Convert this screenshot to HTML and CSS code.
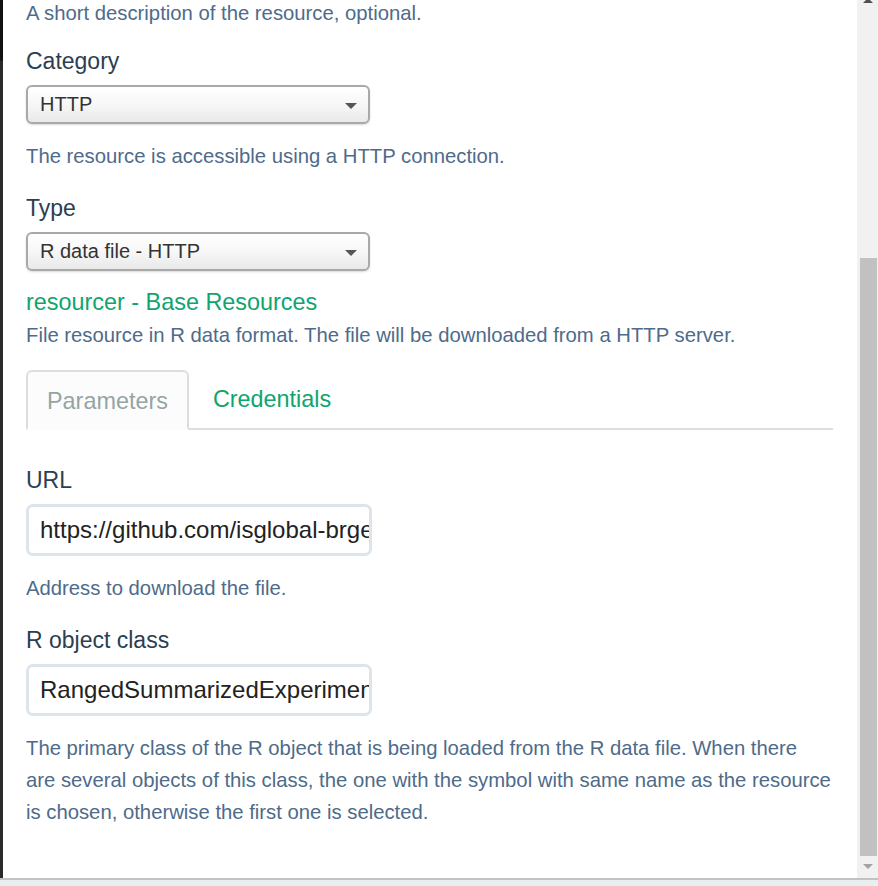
FILE: index.html
```html
<!DOCTYPE html>
<html>
<head>
<meta charset="utf-8">
<link rel="stylesheet" href="styles.css">
</head>
<body>
<div class="screen">
  <div class="backdrop"></div>
  <div class="modal-body">
    <p class="help first">A short description of the resource, optional.</p>

    <div class="group first-group">
      <label class="label">Category</label>
      <div class="select"><span>HTTP</span><span class="caret"></span></div>
      <p class="help">The resource is accessible using a HTTP connection.</p>
    </div>

    <div class="group">
      <label class="label">Type</label>
      <div class="select"><span>R data file - HTTP</span><span class="caret"></span></div>
    </div>

    <div class="provider">resourcer - Base Resources</div>
    <p class="help tight">File resource in R data format. The file will be downloaded from a HTTP server.</p>

    <ul class="tabs">
      <li class="tab active">Parameters</li>
      <li class="tab">Credentials</li>
    </ul>

    <div class="group url">
      <label class="label">URL</label>
      <div class="input">https://github.com/isglobal-brge/</div>
      <p class="help">Address to download the file.</p>
    </div>

    <div class="group">
      <label class="label">R object class</label>
      <div class="input">RangedSummarizedExperiment</div>
      <p class="help para">The primary class of the R object that is being loaded from the R data file. When there<br>are several objects of this class, the one with the symbol with same name as the resource is chosen, otherwise the first one is selected.</p>
    </div>
  </div>
  <div class="scrollbar">
    <div class="arrow up"></div>
    <div class="track-gap"></div>
    <div class="thumb"></div>
    <div class="arrow down"></div>
  </div>
</div>
<div class="footer-line"></div>
<div class="footer"></div>
</body>
</html>
```

FILE: styles.css
```css
* { box-sizing: border-box; }
html, body { margin: 0; padding: 0; }
body {
  width: 878px;
  height: 886px;
  overflow: hidden;
  background: #fff;
  font-family: "Liberation Sans", Arial, sans-serif;
}
.screen {
  display: flex;
  height: 878px;
}
.backdrop {
  width: 3px;
  flex: none;
  background: linear-gradient(#111 0, #111 60px, #2a2a2a 61px, #2a2a2a 100%);
}
.modal-body {
  flex: 1;
  overflow: hidden;
  padding: 0 0 0 23px;
  background: #fff;
}
.help {
  margin: 16px 0 0;
  font-size: 20.3px;
  line-height: 32px;
  color: #4e6b8a;
  width: 808px;
}
.help.para { width: 816px; }
.help.first { margin-top: -3px; }
.help.tight { margin-top: 2px; }
.group { margin-top: 21px; }
.group.first-group { margin-top: 17px; }
.label {
  display: block;
  font-size: 23px;
  line-height: 30px;
  color: #2c3e50;
}
.select {
  margin-top: 9px;
  width: 344px;
  height: 39px;
  border: 2px solid #a9a9a9;
  border-radius: 6px;
  background: linear-gradient(#ffffff 0%, #f7f7f7 50%, #e9e9e9 100%);
  box-shadow: 0 1px 2px rgba(0,0,0,0.15);
  display: flex;
  align-items: center;
  justify-content: space-between;
  padding: 0 11px 0 12px;
  font-size: 20px;
  color: #333;
}
.caret {
  width: 0; height: 0;
  border-left: 6px solid transparent;
  border-right: 6px solid transparent;
  border-top: 6px solid #555;
  margin-top: 2px;
}
.provider {
  margin-top: 16px;
  font-size: 23.4px;
  line-height: 30px;
  color: #10a46e;
}
.tabs {
  list-style: none;
  margin: 19px 0 0;
  padding: 0;
  display: flex;
  width: 807px;
  border-bottom: 2px solid #dddddd;
  height: 60px;
}
.tab {
  font-size: 23.4px;
  line-height: 58px;
  padding: 0 21px 0 24px;
  color: #10a46e;
  margin-bottom: -2px;
}
.tab.active {
  color: #95a5a6;
  border: 2px solid #dddddd;
  border-bottom-color: #fcfcfc;
  border-radius: 6px 6px 0 0;
  background: #fcfcfc;
  height: 60px;
  padding: 0 19px 0 19px;
}
.group.url { margin-top: 35px; }
.input {
  margin-top: 9px;
  width: 346px;
  height: 52px;
  border: 3px solid #dce4ec;
  border-radius: 7px;
  padding: 0 11px;
  font-size: 24px;
  line-height: 46px;
  color: #222;
  white-space: nowrap;
  overflow: hidden;
}
.scrollbar {
  width: 21px;
  flex: none;
  background: #f1f1f1;
  display: flex;
  flex-direction: column;
  align-items: center;
  padding-left: 1px;
}
.arrow {
  width: 0; height: 0;
  border-left: 5px solid transparent;
  border-right: 5px solid transparent;
  flex: none;
}
.arrow.up {
  border-bottom: 5px solid #505050;
  margin-top: -2px;
}
.track-gap { height: 255px; flex: none; }
.thumb {
  width: 17px;
  height: 598px;
  background: #c1c1c1;
  flex: none;
}
.arrow.down {
  border-top: 5px solid #a3a3a3;
  margin-top: 8px;
}
.footer-line { height: 2px; background: #c2c2c2; }
.footer { height: 6px; background: #e9eeee; }
```
